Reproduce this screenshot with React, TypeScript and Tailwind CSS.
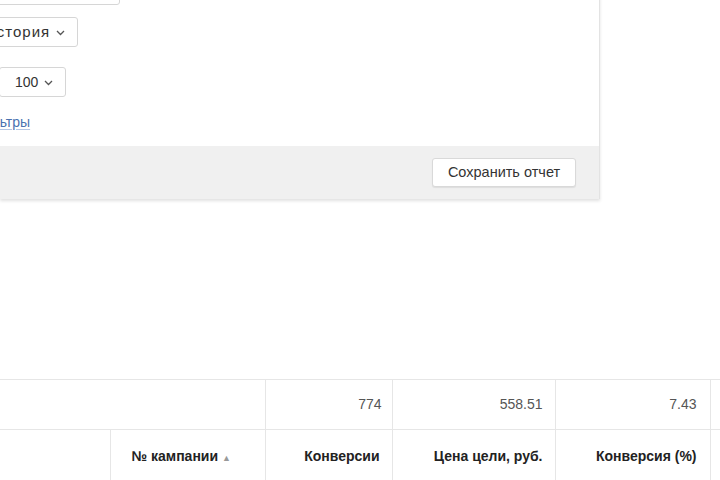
import React from 'react'

const font = { fontFamily: '"Liberation Sans", Arial, sans-serif' }

function Chevron() {
  return (
    <svg width="9" height="6" viewBox="0 0 9 6" className="ml-[6px] mt-[2px]">
      <polyline points="1,1 4.5,4.5 8,1" fill="none" stroke="#555" strokeWidth="1.3" />
    </svg>
  )
}

const COLS = [110, 155, 127, 163, 155, 120]

export default function App() {
  return (
    <div className="w-[720px] h-[480px] overflow-hidden bg-white text-[#333]" style={font}>
      {/* Панель настроек отчета */}
      <div className="w-[600px] mt-[-25px] bg-white border-r border-[#e3e3e3] shadow-[0_2px_3px_rgba(0,0,0,0.12)]">
        <div className="flex flex-col items-start pb-[15px]">
          <div className="w-[150px] h-[30px] ml-[-30px] border border-[#d6d6d6] rounded-[3px] bg-white" />
          <button className="h-[30px] mt-[12px] ml-[-28px] pl-[12px] pr-[12px] flex items-center border border-[#d6d6d6] rounded-[3px] bg-white text-[15px] tracking-[1px] text-[#333]">
            История
            <Chevron />
          </button>
          <button className="h-[30px] mt-[20px] ml-[-1px] pl-[15px] pr-[12px] flex items-center border border-[#d6d6d6] rounded-[3px] bg-white text-[14px] text-[#333]">
            100
            <Chevron />
          </button>
          <span className="mt-[16px] ml-[-27px] text-[14px] leading-[18px] text-[#4a72b0] underline decoration-[#b3c6e4] underline-offset-2">
            Фильтры
          </span>
        </div>
        <div className="h-[53px] bg-[#f0f0f0] flex items-start justify-end pt-[12px] pr-[23px]">
          <button className="w-[144px] h-[29px] bg-white border border-[#d9d9d9] rounded-[3px] shadow-[0_1px_1px_rgba(0,0,0,0.08)] text-[14.5px] text-[#333]">
            Сохранить отчет
          </button>
        </div>
      </div>

      {/* Таблица статистики */}
      <table className="mt-[180px] border-collapse table-fixed w-[830px] text-[14px]">
        <colgroup>
          {COLS.map((w, i) => (
            <col key={i} style={{ width: w }} />
          ))}
        </colgroup>
        <tbody>
          <tr className="h-[50px] border-t border-[#e6e6e6]">
            <td colSpan={2} className="border-b border-r border-[#e6e6e6]" />
            <td className="border-b border-r border-[#e6e6e6] text-right pr-[10px] text-[#555]">774</td>
            <td className="border-b border-r border-[#e6e6e6] text-right pr-[12px] text-[#555]">558.51</td>
            <td className="border-b border-r border-[#e6e6e6] text-right pr-[13px] text-[#555]">7.43</td>
            <td className="border-b border-[#e6e6e6]" />
          </tr>
          <tr className="h-[56px] font-bold text-[#222]">
            <td className="border-r border-[#e6e6e6]" />
            <td className="border-r border-[#e6e6e6] pl-[21px] pb-[2px]">
              № кампании <span className="text-[9px] text-[#999] font-normal">▲</span>
            </td>
            <td className="border-r border-[#e6e6e6] text-right pr-[12px] pb-[2px]">Конверсии</td>
            <td className="border-r border-[#e6e6e6] text-right pr-[12px] pb-[2px]">Цена цели, руб.</td>
            <td className="border-r border-[#e6e6e6] text-right pr-[13px] pb-[2px]">Конверсия (%)</td>
            <td />
          </tr>
        </tbody>
      </table>
    </div>
  )
}
